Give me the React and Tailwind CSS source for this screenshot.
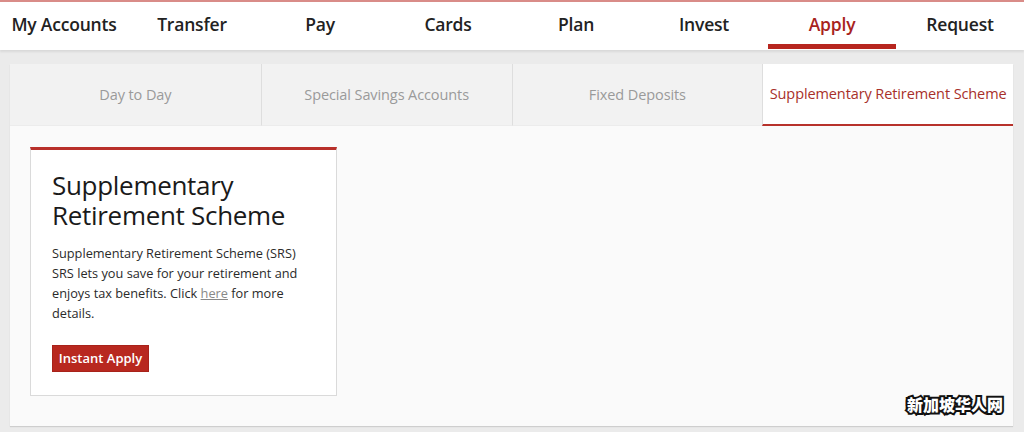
import React from "react";

const NAV = ["My Accounts", "Transfer", "Pay", "Cards", "Plan", "Invest", "Apply", "Request"];
const TABS = ["Day to Day", "Special Savings Accounts", "Fixed Deposits", "Supplementary Retirement Scheme"];

export default function App() {
  return (
    <div
      className="relative w-[1024px] h-[432px] overflow-hidden bg-[#ebebeb]"
      style={{ fontFamily: '"Open Sans", "Noto Sans", sans-serif' }}
    >
      <div className="h-[2px] bg-[#d98c88]" />
      {/* main nav */}
      <nav className="grid grid-cols-8 h-[48px] bg-white shadow-[0_2px_2px_rgba(0,0,0,0.08)] relative z-10">
        {NAV.map((item) => {
          const active = item === "Apply";
          return (
            <div key={item} className="relative flex items-start justify-center pt-[9px]">
              <span
                className={`text-[17.5px] leading-[26px] font-semibold tracking-[-0.2px] ${
                  active ? "text-[#a8231d]" : "text-[#222]"
                }`}
              >
                {item}
              </span>
              {active && <div className="absolute left-0 right-0 bottom-[1px] h-[5px] bg-[#b7261f]" />}
            </div>
          );
        })}
      </nav>

      {/* panel */}
      <div className="ml-[10px] mr-[11px] mt-[14px] bg-[#fafafa] shadow-[0_1px_1px_rgba(0,0,0,0.12)]">
        <div className="grid grid-cols-4 h-[62px]">
          {TABS.map((tab, i) => {
            const active = i === 3;
            return (
              <div
                key={tab}
                className={`flex items-center justify-center text-[14.5px] tracking-[-0.1px] ${
                  active
                    ? "bg-white text-[#a8302a] border-b-2 border-[#b7322b]"
                    : "bg-[#f2f2f2] text-[#9a9a9a] border-b border-[#ececec]"
                } ${i > 0 ? "border-l border-l-[#dedede]" : ""}`}
              >
                {tab}
              </div>
            );
          })}
        </div>

        <div className="h-[300px] pl-[20px] pt-[21px]">
          <div className="w-[307px] h-[249px] bg-white border border-[#dadada] border-t-[3px] border-t-[#b8302a] pl-[21px] pt-[20px]">
            <h1 className="text-[26px] leading-[30px] text-[#1a1a1a] tracking-[-0.3px]">
              Supplementary
              <br />
              Retirement Scheme
            </h1>
            <p className="mt-[13px] text-[12.75px] leading-[20px] text-[#2a2a2a] pr-[18px]">
              Supplementary Retirement Scheme (SRS) SRS lets you save for your retirement and enjoys tax benefits. Click{" "}
              <span className="underline text-[#888]">here</span> for more details.
            </p>
            <button className="mt-[22px] h-[27px] w-[97px] bg-[#b8281f] text-white text-[13px] font-semibold border border-[#a8221a]">
              Instant Apply
            </button>
          </div>
        </div>
      </div>

      <div
        className="absolute left-[907px] top-[394px] text-[16px] leading-[20px] font-black text-white [-webkit-text-stroke:4px_#111] [paint-order:stroke_fill]"
        style={{ fontFamily: '"Noto Sans CJK SC", sans-serif' }}
      >
        新加坡华人网
      </div>
    </div>
  );
}
